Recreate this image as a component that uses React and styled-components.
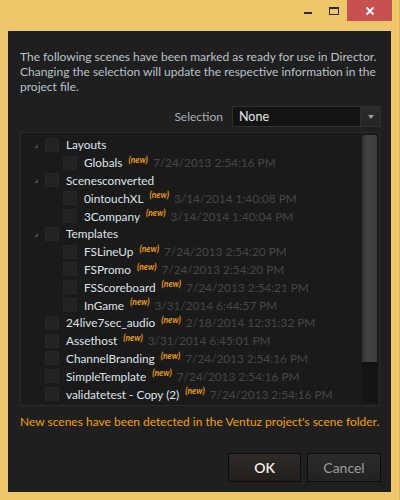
import React from 'react';
import styled, { createGlobalStyle } from 'styled-components';

const GlobalStyle = createGlobalStyle`
  html, body {
    margin: 0;
    padding: 0;
    background: #f0c66a;
  }
  * { box-sizing: border-box; }
`;

const Frame = styled.div`
  width: 400px;
  height: 500px;
  background: #f0c66a;
  display: flex;
  flex-direction: column;
  font-family: Lato, "Noto Sans", sans-serif;
  border-right: 1px solid #d9b25c;
`;

const TitleBar = styled.div`
  height: 31px;
  display: flex;
  justify-content: flex-end;
  align-items: flex-start;
  padding-right: 7px;
`;

const CaptionButton = styled.div`
  width: ${p => (p.close ? '45px' : '26px')};
  height: 21px;
  display: flex;
  align-items: center;
  justify-content: center;
  background: ${p => (p.close ? '#c75050' : 'transparent')};
`;

const Body = styled.div`
  flex: 1;
  margin: 0 8px 8px 8px;
  background: #1f1f1f;
  display: flex;
  flex-direction: column;
  padding: 18px 10px 10px 12px;
`;

const Intro = styled.div`
  font-size: 12px;
  line-height: 15px;
  color: #b9c2cb;
`;

const Line = styled.div`
  white-space: nowrap;
`;

const SelectRow = styled.div`
  display: flex;
  justify-content: flex-end;
  align-items: center;
  gap: 9px;
  margin-top: 12px;
`;

const Label = styled.span`
  font-size: 12px;
  color: #a6aeb8;
`;

const Select = styled.div`
  width: 149px;
  height: 21px;
  background: #131313;
  border: 1px solid #2e2e2e;
  display: flex;
  align-items: stretch;
`;

const SelectValue = styled.span`
  flex: 1;
  font-size: 12.5px;
  line-height: 19px;
  padding-left: 6px;
  color: #e6e9f2;
`;

const SelectArrow = styled.div`
  width: 20px;
  border-left: 1px solid #2e2e2e;
  background: linear-gradient(#2c2c2c, #242424);
  display: flex;
  align-items: center;
  justify-content: center;
  &::after {
    content: '';
    border-left: 3.5px solid transparent;
    border-right: 3.5px solid transparent;
    border-top: 4px solid #9a9a9a;
  }
`;

const TreeBox = styled.div`
  margin-top: 5px;
  margin-right: 1px;
  height: 274px;
  background: #1a1a1a;
  border: 1px solid #2b2b2b;
  display: flex;
  padding: 2px 1px 2px 0;
`;

const Rows = styled.div`
  flex: 1;
  padding-top: 1px;
  display: flex;
  flex-direction: column;
`;

const Row = styled.div`
  height: 17.86px;
  display: flex;
  align-items: center;
  padding-left: ${p => 6 + p.level * 18}px;
  white-space: nowrap;
`;

const Expander = styled.span`
  width: 18px;
  display: flex;
  justify-content: center;
  &::after {
    content: '';
    visibility: ${p => (p.show ? 'visible' : 'hidden')};
    width: 0;
    height: 0;
    border-left: 4px solid transparent;
    border-bottom: 4px solid #4a4a4a;
    margin-top: 2px;
  }
`;

const Check = styled.span`
  width: 14px;
  height: 14px;
  background: #222;
  border: 1px solid #262626;
  margin-right: 7px;
  flex-shrink: 0;
`;

const Name = styled.span`
  font-size: 11.8px;
  color: #dfe4ea;
`;

const NewTag = styled.span`
  font-size: 8.5px;
  font-weight: bold;
  font-style: italic;
  color: #ee9a1a;
  margin-left: 6px;
  align-self: flex-start;
  margin-top: 1px;
`;

const DateText = styled.span`
  font-size: 11.8px;
  color: #474747;
  margin-left: 5px;
`;

const ScrollTrack = styled.div`
  width: 15px;
  background: #141414;
  margin-right: 1px;
  display: flex;
  flex-direction: column;
`;

const ScrollThumb = styled.div`
  height: 227px;
  background: linear-gradient(90deg, #333 0%, #444 40%, #3d3d3d 100%);
  border-radius: 2px 2px 0 0;
`;

const Message = styled.p`
  margin: 8px 0 0 0;
  font-size: 12px;
  white-space: nowrap;
  color: #f0a00c;
`;

const Buttons = styled.div`
  margin-top: auto;
  display: flex;
  justify-content: flex-end;
  gap: 6px;
`;

const Button = styled.button`
  width: ${p => (p.primary ? '73px' : '74px')};
  height: 29px;
  border: 1px solid #0c0c0c;
  background: ${p =>
    p.primary
      ? 'linear-gradient(#302b28, #221e1c)'
      : 'linear-gradient(#2b2b2b, #222)'};
  color: ${p => (p.primary ? '#f2f2f2' : '#9c9c9c')};
  font-family: Lato, "Noto Sans", sans-serif;
  font-size: 14px;
  font-weight: ${p => (p.primary ? 600 : 400)};
  padding: 0;
`;

const scenes = [
  { name: 'Layouts', level: 0, folder: true },
  { name: 'Globals', level: 1, date: '7/24/2013 2:54:16 PM' },
  { name: 'Scenesconverted', level: 0, folder: true },
  { name: '0intouchXL', level: 1, date: '3/14/2014 1:40:08 PM' },
  { name: '3Company', level: 1, date: '3/14/2014 1:40:04 PM' },
  { name: 'Templates', level: 0, folder: true },
  { name: 'FSLineUp', level: 1, date: '7/24/2013 2:54:20 PM' },
  { name: 'FSPromo', level: 1, date: '7/24/2013 2:54:20 PM' },
  { name: 'FSScoreboard', level: 1, date: '7/24/2013 2:54:21 PM' },
  { name: 'InGame', level: 1, date: '3/31/2014 6:44:57 PM' },
  { name: '24live7sec_audio', level: 0, date: '2/18/2014 12:31:32 PM' },
  { name: 'Assethost', level: 0, date: '3/31/2014 6:45:01 PM' },
  { name: 'ChannelBranding', level: 0, date: '7/24/2013 2:54:16 PM' },
  { name: 'SimpleTemplate', level: 0, date: '7/24/2013 2:54:16 PM' },
  { name: 'validatetest - Copy (2)', level: 0, date: '7/24/2013 2:54:16 PM' },
];

export default function App() {
  return (
    <Frame>
      <GlobalStyle />
      <TitleBar>
        <CaptionButton>
          <svg width="10" height="10" viewBox="0 0 10 10">
            <rect x="1" y="6" width="8" height="2" fill="#2a2a2a" />
          </svg>
        </CaptionButton>
        <CaptionButton>
          <svg width="12" height="10" viewBox="0 0 12 10">
            <rect x="1.5" y="1.5" width="9" height="7" fill="none" stroke="#2a2a2a" strokeWidth="1" />
            <rect x="1" y="1" width="10" height="2" fill="#2a2a2a" />
          </svg>
        </CaptionButton>
        <CaptionButton close>
          <svg width="10" height="10" viewBox="0 0 10 10">
            <path d="M1.5 1.5 L8.5 8.5 M8.5 1.5 L1.5 8.5" stroke="#fff" strokeWidth="1.8" />
          </svg>
        </CaptionButton>
      </TitleBar>
      <Body>
        <Intro>
          <Line>The following scenes have been marked as ready for use in Director.</Line>
          <Line>Changing the selection will update the respective information in the</Line>
          <Line>project file.</Line>
        </Intro>
        <SelectRow>
          <Label>Selection</Label>
          <Select>
            <SelectValue>None</SelectValue>
            <SelectArrow />
          </Select>
        </SelectRow>
        <TreeBox>
          <Rows>
            {scenes.map(s => (
              <Row key={s.name} level={s.folder ? 0 : s.level}>
                <Expander show={s.folder} />
                <Check />
                <Name>{s.name}</Name>
                {s.date && <NewTag>(new)</NewTag>}
                {s.date && <DateText>{s.date}</DateText>}
              </Row>
            ))}
          </Rows>
          <ScrollTrack>
            <ScrollThumb />
          </ScrollTrack>
        </TreeBox>
        <Message>New scenes have been detected in the Ventuz project's scene folder.</Message>
        <Buttons>
          <Button primary>OK</Button>
          <Button>Cancel</Button>
        </Buttons>
      </Body>
    </Frame>
  );
}
